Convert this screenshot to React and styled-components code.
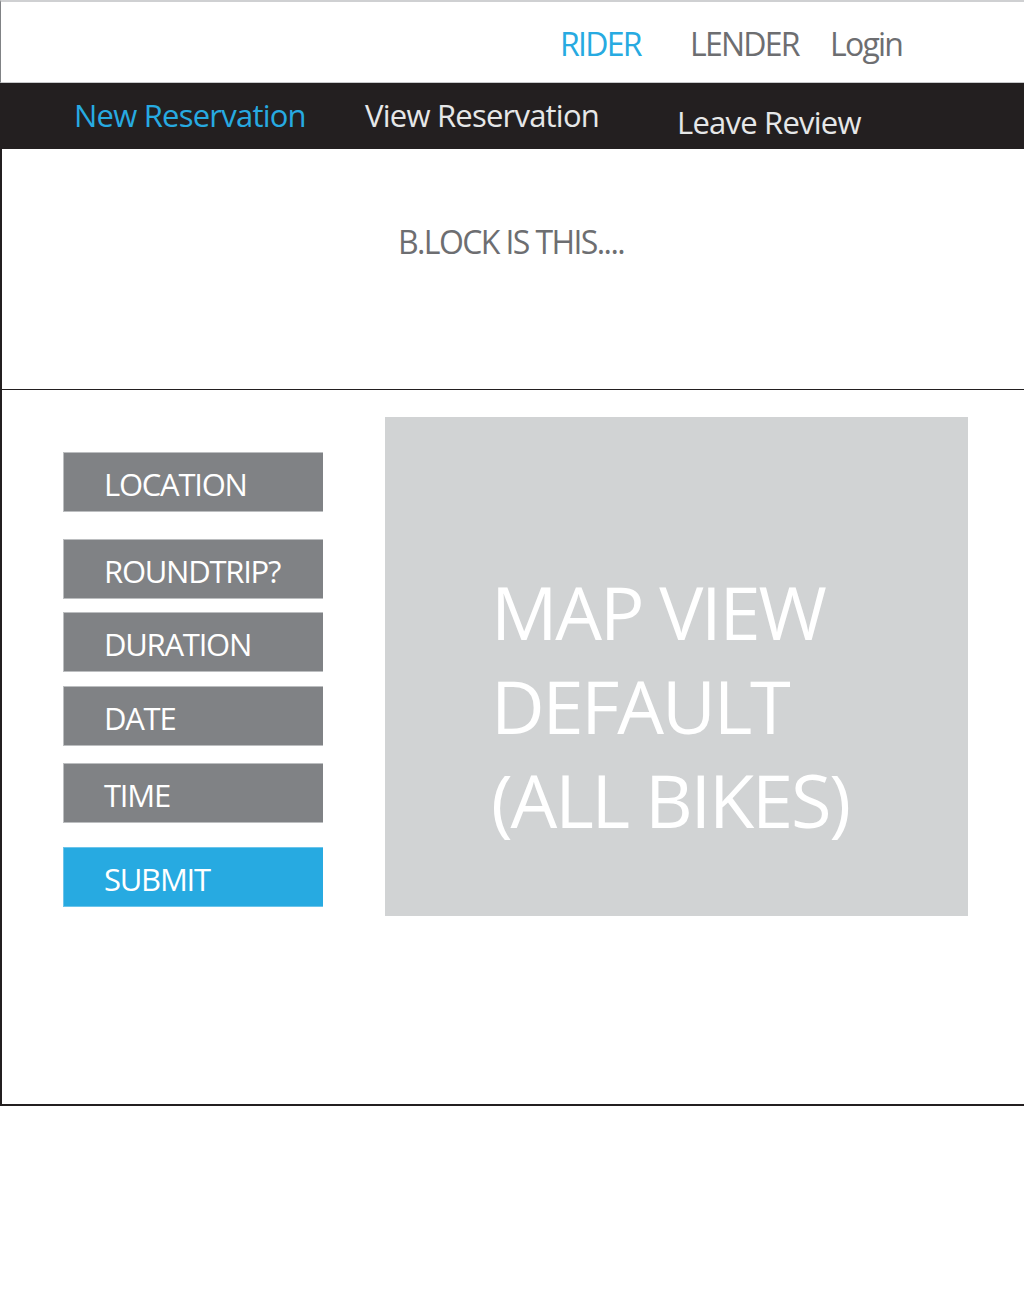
import React from "react";
import styled, { createGlobalStyle } from "styled-components";

const GlobalStyle = createGlobalStyle`
  body {
    margin: 0;
    background-color: #ffffff;
    font-family: "Open Sans", "Noto Sans", sans-serif;
  }
`;

const Page = styled.div`
  width: 1024px;
  display: flex;
  flex-direction: column;
`;

const TopBar = styled.div`
  height: 54px;
  border-top: 2px solid #cfd0d2;
  border-bottom: 1px solid #c7c8ca;
  border-left: 1px solid #808285;
  display: flex;
  flex-direction: row;
  align-items: flex-start;
  padding-left: 559px;
  padding-top: 26px;
`;

const TopLink = styled.span`
  width: ${(p) => (p.$w ? `${p.$w}px` : "auto")};
  font-size: 32px;
  line-height: 32px;
  letter-spacing: -0.055em;
  color: ${(p) => (p.$active ? "#27aae1" : "#6d6e71")};
  white-space: nowrap;
`;

const NavBar = styled.div`
  height: 66px;
  box-sizing: border-box;
  background-color: #231f20;
  display: flex;
  flex-direction: row;
  align-items: flex-start;
  padding-left: 74px;
  padding-top: 17px;
`;

const NavLink = styled.span`
  width: ${(p) => (p.$w ? `${p.$w}px` : "auto")};
  margin-top: ${(p) => p.$drop || 0}px;
  font-size: 31px;
  line-height: 31px;
  letter-spacing: -0.025em;
  color: ${(p) => (p.$active ? "#27aae1" : "#e6e7e8")};
  white-space: nowrap;
`;

const Hero = styled.div`
  height: 241px;
  box-sizing: border-box;
  border-left: 2px solid #231f20;
  border-bottom: 1px solid #231f20;
  display: flex;
  justify-content: center;
  align-items: flex-start;
  padding-top: 77px;
`;

const HeroText = styled.h1`
  margin: 0 0 0 -4px;
  font-weight: 400;
  font-size: 32px;
  line-height: 32px;
  letter-spacing: -0.05em;
  color: #6d6e71;
`;

const Main = styled.div`
  height: 716px;
  box-sizing: border-box;
  border-left: 2px solid #231f20;
  border-bottom: 2px solid #231f20;
  box-shadow: 0 1px 0 #bcbec0;
  display: flex;
  flex-direction: row;
  align-items: flex-start;
  padding-left: 61px;
  padding-top: 27px;
  gap: 62px;
`;

const Form = styled.div`
  width: 260px;
  margin-top: 35px;
  display: flex;
  flex-direction: column;
`;

const FieldButton = styled.button`
  width: 260px;
  height: 60px;
  margin-top: ${(p) => p.$space}px;
  box-sizing: border-box;
  border: 1px solid ${(p) => (p.$primary ? "#6cc4ea" : "#bcbec0")};
  border-right: none;
  background-color: ${(p) => (p.$primary ? "#27aae1" : "#808285")};
  color: #ffffff;
  text-align: left;
  padding: 4px 0 0 40px;
  font-family: "Open Sans", "Noto Sans", sans-serif;
  font-size: 31px;
  line-height: 31px;
  letter-spacing: -0.04em;
  display: block;
`;

const MapView = styled.div`
  width: 583px;
  height: 499px;
  background-color: #d1d3d4;
  padding: 148px 0 0 106px;
  box-sizing: border-box;
`;

const MapLabel = styled.div`
  font-size: 74px;
  line-height: 94px;
  letter-spacing: -0.03em;
  color: #ffffff;
  white-space: nowrap;
`;

const fields = [
  { label: "LOCATION", space: 0 },
  { label: "ROUNDTRIP?", space: 27 },
  { label: "DURATION", space: 13 },
  { label: "DATE", space: 14 },
  { label: "TIME", space: 17 },
  { label: "SUBMIT", space: 24, primary: true },
];

const App = () => {
  return (
    <Page>
      <GlobalStyle />
      <TopBar>
        <TopLink $w={130} $active>RIDER</TopLink>
        <TopLink $w={140}>LENDER</TopLink>
        <TopLink>Login</TopLink>
      </TopBar>
      <NavBar>
        <NavLink $w={291} $active>New Reservation</NavLink>
        <NavLink $w={312}>View Reservation</NavLink>
        <NavLink $drop={7}>Leave Review</NavLink>
      </NavBar>
      <Hero>
        <HeroText>B.LOCK IS THIS....</HeroText>
      </Hero>
      <Main>
        <Form>
          {fields.map((f) => (
            <FieldButton key={f.label} $space={f.space} $primary={f.primary}>
              {f.label}
            </FieldButton>
          ))}
        </Form>
        <MapView>
          <MapLabel>MAP VIEW</MapLabel>
          <MapLabel>DEFAULT</MapLabel>
          <MapLabel>(ALL BIKES)</MapLabel>
        </MapView>
      </Main>
    </Page>
  );
};

export default App;
